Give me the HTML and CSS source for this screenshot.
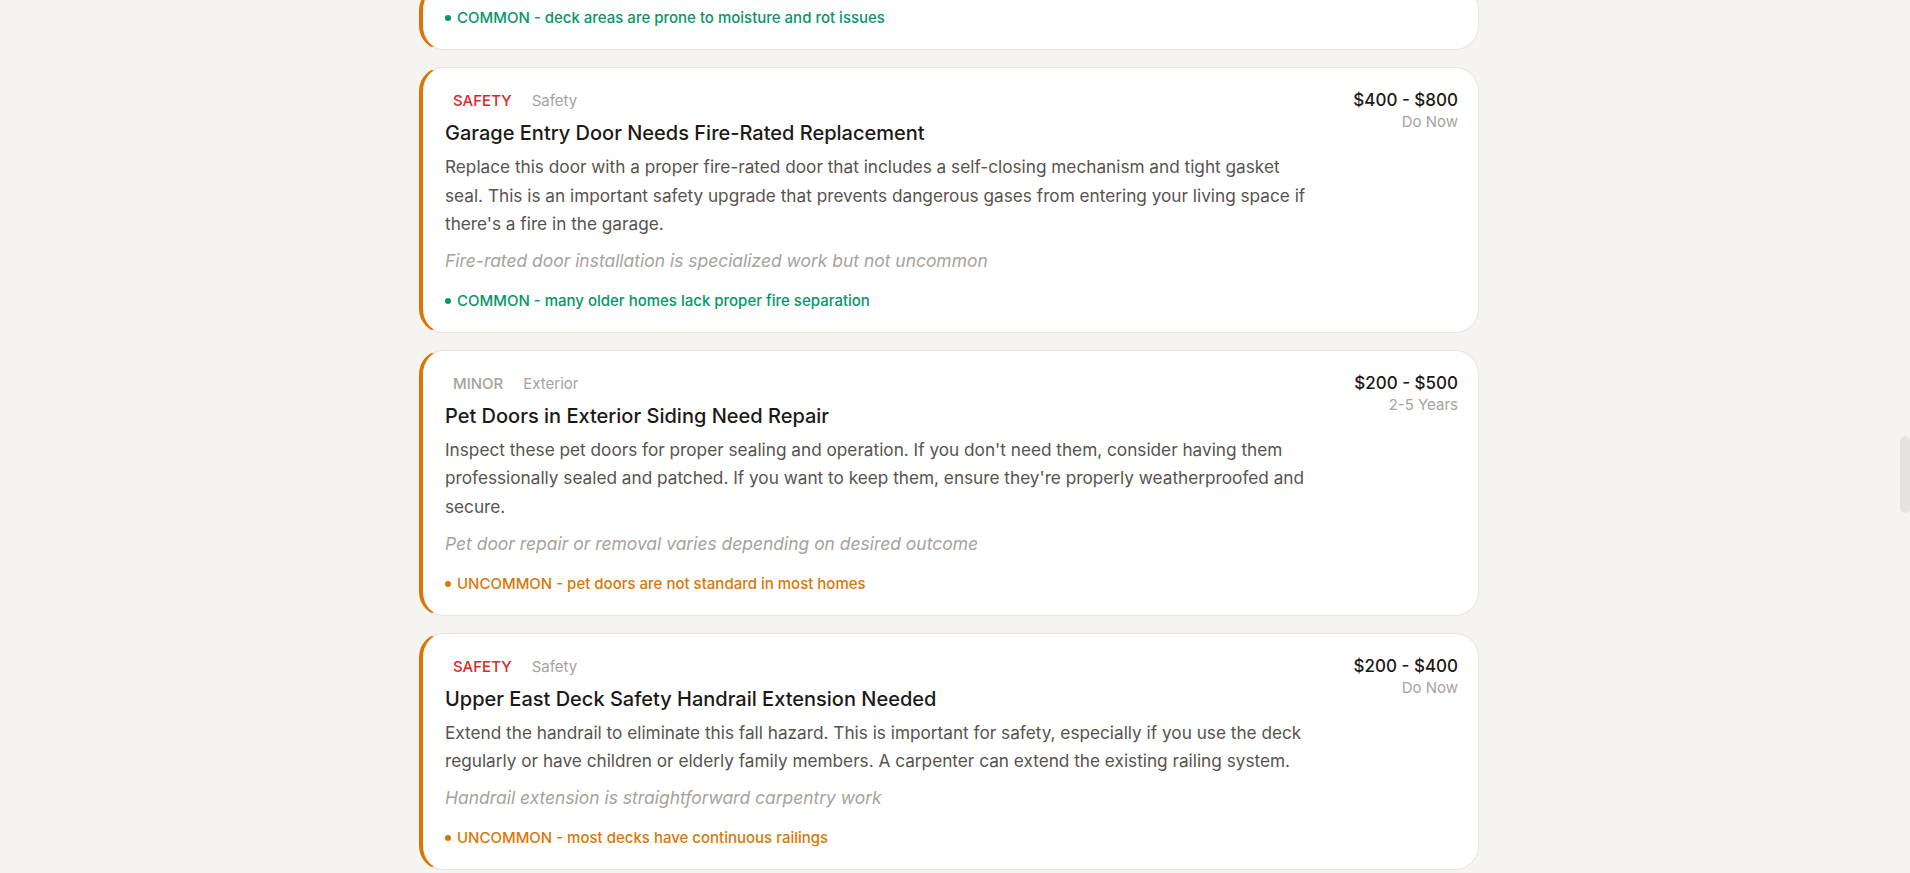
FILE: index.html
```html
<!DOCTYPE html>
<html lang="en">
<head>
<meta charset="utf-8">
<title>Inspection Findings</title>
<link rel="stylesheet" href="styles.css">
</head>
<body>
<div class="app">
  <main class="main" id="main">
    <div class="list">
      <article class="card">
        <div class="card-main">
          <div class="freq freq-common first"><span class="dot"></span>COMMON - deck areas are prone to moisture and rot issues</div>
        </div>
      </article>

      <article class="card">
        <div class="card-main">
          <div class="meta"><span class="badge badge-safety">SAFETY</span><span class="category">Safety</span></div>
          <h3 class="title">Garage Entry Door Needs Fire-Rated Replacement</h3>
          <p class="desc">Replace this door with a proper fire-rated door that includes a self-closing mechanism and tight gasket seal. This is an important safety upgrade that prevents dangerous gases from entering your living space if there's a fire in the garage.</p>
          <p class="note">Fire-rated door installation is specialized work but not uncommon</p>
          <div class="freq freq-common"><span class="dot"></span>COMMON - many older homes lack proper fire separation</div>
        </div>
        <div class="side"><div class="price">$400 - $800</div><div class="when">Do Now</div></div>
      </article>

      <article class="card">
        <div class="card-main">
          <div class="meta"><span class="badge badge-minor">MINOR</span><span class="category">Exterior</span></div>
          <h3 class="title">Pet Doors in Exterior Siding Need Repair</h3>
          <p class="desc">Inspect these pet doors for proper sealing and operation. If you don't need them, consider having them professionally sealed and patched. If you want to keep them, ensure they're properly weatherproofed and secure.</p>
          <p class="note">Pet door repair or removal varies depending on desired outcome</p>
          <div class="freq freq-uncommon"><span class="dot"></span>UNCOMMON - pet doors are not standard in most homes</div>
        </div>
        <div class="side"><div class="price">$200 - $500</div><div class="when">2-5 Years</div></div>
      </article>

      <article class="card">
        <div class="card-main">
          <div class="meta"><span class="badge badge-safety">SAFETY</span><span class="category">Safety</span></div>
          <h3 class="title">Upper East Deck Safety Handrail Extension Needed</h3>
          <p class="desc">Extend the handrail to eliminate this fall hazard. This is important for safety, especially if you use the deck regularly or have children or elderly family members. A carpenter can extend the existing railing system.</p>
          <p class="note">Handrail extension is straightforward carpentry work</p>
          <div class="freq freq-uncommon"><span class="dot"></span>UNCOMMON - most decks have continuous railings</div>
        </div>
        <div class="side"><div class="price">$200 - $400</div><div class="when">Do Now</div></div>
      </article>
    </div>
  </main>
  <div class="scrollbar"><div class="thumb"></div></div>
</div>
<script src="script.js"></script>
</body>
</html>
```

FILE: styles.css
```css
html, body {
  margin: 0;
  height: 100%;
  overflow: hidden;
}
body {
  background: #f5f4f0;
  font-family: Inter, "Noto Sans", "Liberation Sans", sans-serif;
  color: #1c1917;
}
.app {
  display: flex;
  height: 100vh;
}
.main {
  flex: 1;
  min-width: 0;
  overflow: hidden;
}
.list {
  max-width: 1060px;
  margin: 0 auto;
  padding: 24px 0 48px;
  display: flex;
  flex-direction: column;
  gap: 17px;
}
.card {
  background: #ffffff;
  border: 1px solid #e7e5e4;
  border-left: 4px solid #d97706;
  border-radius: 24px;
  padding: 20px 20px 20px 22px;
  display: flex;
  gap: 24px;
}
.card-main {
  flex: 1;
  min-width: 0;
}
.meta {
  display: flex;
  align-items: center;
  gap: 12px;
  height: 26px;
}
.badge {
  font-size: 15px;
  line-height: 20px;
  padding: 3px 8px;
  font-weight: 500;
}
.badge-safety { color: #dc2626; }
.badge-minor { color: #a8a29e; }
.category {
  font-size: 15px;
  line-height: 20px;
  color: #a8a29e;
}
.title {
  margin: 5px 0 0;
  font-size: 20px;
  line-height: 28px;
  font-weight: 500;
  color: #1c1917;
}
.desc {
  margin: 6px 0 0;
  max-width: 874px;
  font-size: 17.22px;
  line-height: 28.6px;
  color: #57534e;
}
.note {
  margin: 8px 0 0;
  font-size: 17.45px;
  line-height: 28px;
  font-style: italic;
  color: #a8a29e;
}
.freq {
  margin-top: 15px;
  display: flex;
  align-items: center;
  gap: 6px;
  font-size: 15px;
  line-height: 22px;
  font-weight: 500;
}
.freq.first {
  margin-top: 0;
}
.freq-common { color: #059669; }
.freq-uncommon { color: #d97706; }
.dot {
  width: 6px;
  height: 6px;
  border-radius: 50%;
  background: currentColor;
  flex: none;
}
.side {
  flex: none;
  text-align: right;
}
.price {
  font-size: 17px;
  line-height: 24px;
  font-weight: 500;
  color: #1c1917;
}
.when {
  font-size: 15px;
  line-height: 20px;
  color: #a8a29e;
}
.scrollbar {
  flex: none;
  width: 12px;
  display: flex;
  flex-direction: column;
  align-items: flex-end;
}
.thumb {
  margin-top: 436px;
  width: 10px;
  height: 77px;
  border-radius: 5px;
  background: #e4e3e0;
}
```

FILE: script.js
```js
(function () {
  var main = document.getElementById('main');
  var cards = main.querySelectorAll('.card');
  var target = cards[1];
  var offset = target.getBoundingClientRect().top - main.getBoundingClientRect().top;
  main.scrollTop = offset - 67;
})();
```
